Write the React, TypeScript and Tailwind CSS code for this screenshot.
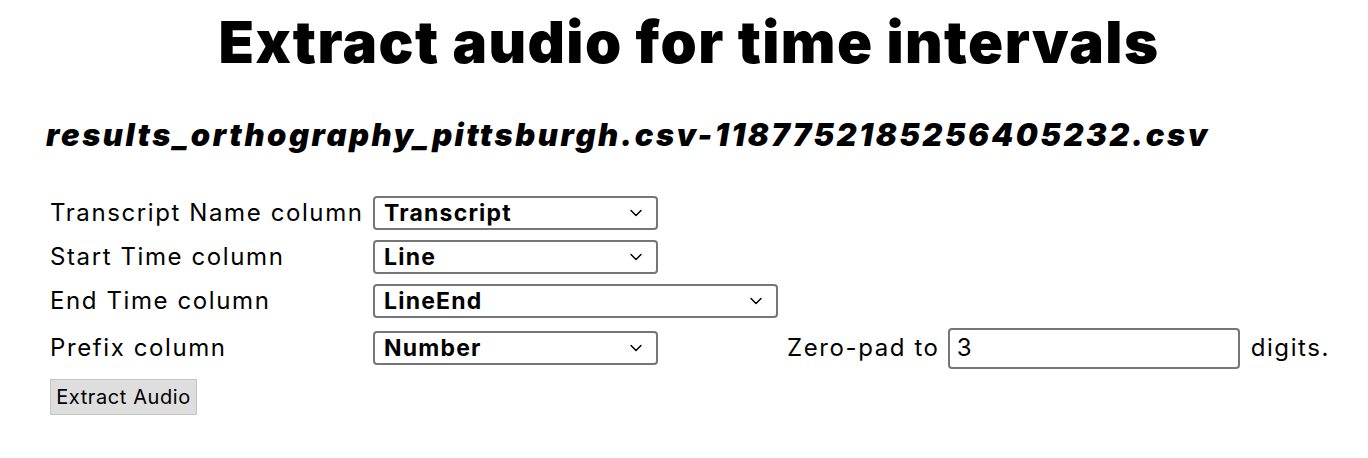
import { ChevronDown } from "lucide-react";

const sans = { fontFamily: "Inter, 'Noto Sans', sans-serif" };

function Select({ value, width }: { value: string; width: string }) {
  return (
    <div
      className={`${width} h-[34px] flex items-center justify-between border-2 border-[#767676] rounded-[4px] bg-white pl-[9px] pr-[10px]`}
    >
      <span className="text-[23px] font-bold leading-none text-black tracking-[1.2px]">{value}</span>
      <ChevronDown size={20} strokeWidth={1.75} className="text-black" />
    </div>
  );
}

export default function App() {
  return (
    <div className="bg-white text-black min-h-[458px]" style={sans}>
      <h1 className="text-center text-[58px] font-black leading-none pt-[13px] pl-[10px] tracking-[1.4px]">
        Extract audio for time intervals
      </h1>
      <h2 className="pl-[46px] pt-[48px] text-[31px] font-black italic leading-none tracking-[2.5px]">
        results_orthography_pittsburgh.csv-1187752185256405232.csv
      </h2>
      <div className="pl-[50px] pt-[41px] text-[24px] tracking-[1.6px]">
        <div className="grid grid-cols-[323px_414px_auto] grid-rows-[44px_44px_44px_50px] items-center">
          <div>Transcript Name column</div>
          <div>
            <Select value="Transcript" width="w-[285px]" />
          </div>
          <div />
          <div>Start Time column</div>
          <div>
            <Select value="Line" width="w-[285px]" />
          </div>
          <div />
          <div>End Time column</div>
          <div>
            <Select value="LineEnd" width="w-[405px]" />
          </div>
          <div />
          <div>Prefix column</div>
          <div>
            <Select value="Number" width="w-[285px]" />
          </div>
          <div className="flex items-center">
            <span>Zero-pad to</span>
            <div className="ml-[8px] w-[292px] h-[41px] border-2 border-[#767676] rounded-[4px] flex items-center pl-[7px] tracking-normal">
              3
            </div>
            <span className="ml-[11px]">digits.</span>
          </div>
        </div>
        <button className="mt-[6px] h-[36px] w-[147px] bg-[#dedede] border border-[#c4c4c4] text-[20px] leading-none tracking-[0.6px]">
          Extract Audio
        </button>
      </div>
    </div>
  );
}
